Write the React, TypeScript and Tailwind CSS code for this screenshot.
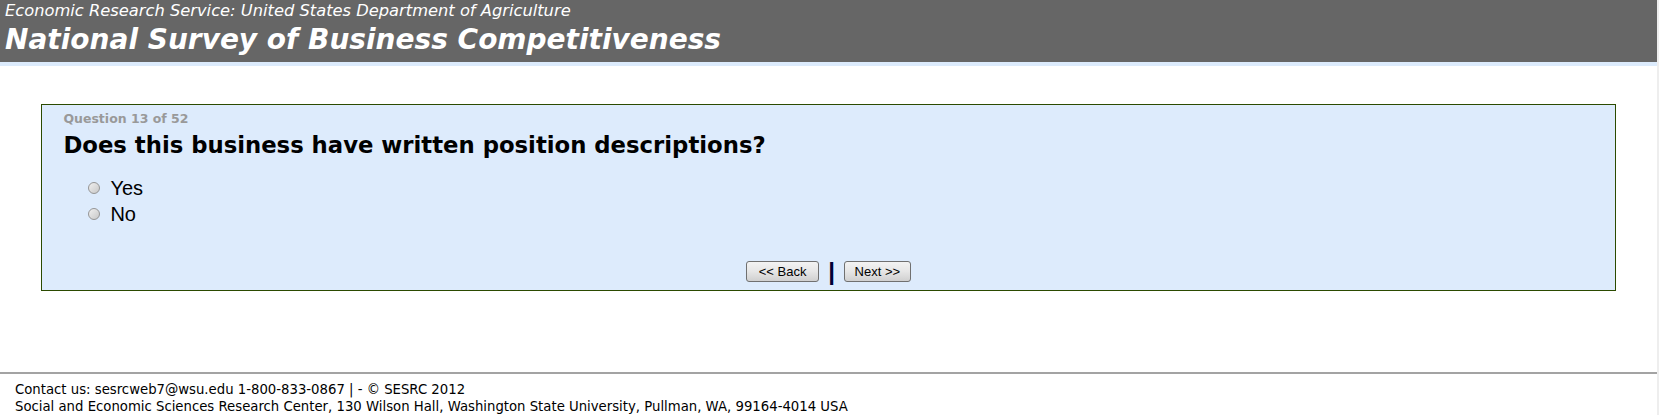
export default function App() {
  return (
    <div className="flex w-full h-[415px] overflow-hidden bg-white">
      <div className="flex-1 flex flex-col">
        {/* Header */}
        <div className="h-[62px] bg-[#666666] px-[5px] text-white font-['DejaVu_Sans',sans-serif]">
          <div className="text-[16.3px] italic leading-[22px]">
            Economic Research Service: United States Department of Agriculture
          </div>
          <div className="text-[28px] font-bold italic leading-[36px]">
            National Survey of Business Competitiveness
          </div>
        </div>
        <div className="h-[4px] bg-[#dcebfc]" />

        {/* Question box */}
        <div className="mt-[38px] w-[95%] mx-auto border border-[#2b4a00] bg-[#ddebfc] px-[21px] pt-[6px] pb-[8px]">
          <div className="font-['DejaVu_Sans',sans-serif] text-[12.5px] font-bold text-[#999999] leading-[15px]">
            Question 13 of 52
          </div>
          <div className="font-['DejaVu_Sans',sans-serif] text-[22.75px] font-bold text-black leading-[28px] mt-[5px]">
            Does this business have written position descriptions?
          </div>
          <div className="mt-[16px] pl-[25px] flex flex-col font-['Liberation_Sans',Arial,sans-serif] text-[20px] text-black">
            {["Yes", "No"].map((label) => (
              <label key={label} className="flex items-center h-[26px]">
                <span className="w-[12px] h-[12px] rounded-full border border-[#959595] bg-gradient-to-br from-[#f0f0f0] to-[#c8c8c8]" />
                <span className="ml-[10px]">{label}</span>
              </label>
            ))}
          </div>
          <div className="mt-[34px] flex justify-center items-center gap-[9px] font-['Liberation_Sans',Arial,sans-serif] text-[13px] text-black">
            <button className="h-[21px] w-[73px] rounded-[3px] border border-[#707070] bg-gradient-to-b from-[#f3f3f3] via-[#e6e6e6] to-[#d0d0d0] leading-none">
              &lt;&lt; Back
            </button>
            <span className="text-[24px] font-bold leading-[21px] text-[#000033]">|</span>
            <button className="h-[21px] w-[67px] rounded-[3px] border border-[#707070] bg-gradient-to-b from-[#f3f3f3] via-[#e6e6e6] to-[#d0d0d0] leading-none">
              Next &gt;&gt;
            </button>
          </div>
        </div>

        {/* Footer */}
        <div className="mt-[81px] border-t-2 border-[#a3a3a3] px-[15px] pt-[7px] font-['DejaVu_Sans',sans-serif] text-[13.25px] text-black leading-[17px]">
          <div>Contact us: sesrcweb7@wsu.edu 1-800-833-0867 | - © SESRC 2012</div>
          <div>
            Social and Economic Sciences Research Center, 130 Wilson Hall, Washington State University, Pullman, WA, 99164-4014 USA
          </div>
        </div>
      </div>
      <div className="w-[2px] bg-[#eeeeee]" />
    </div>
  );
}
